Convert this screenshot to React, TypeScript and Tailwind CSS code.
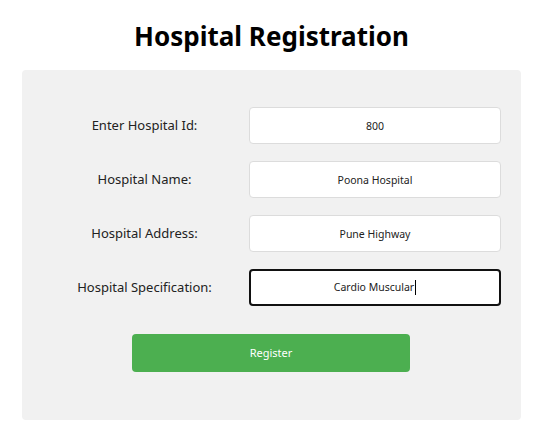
const fields = [
  { label: "Enter Hospital Id:", value: "800" },
  { label: "Hospital Name:", value: "Poona Hospital" },
  { label: "Hospital Address:", value: "Pune Highway" },
];

export default function App() {
  return (
    <div className="min-h-screen bg-white font-['Noto_Sans',sans-serif] text-black">
      <h1 className="h-[70px] pt-[15px] text-center text-[26px] leading-[42px] font-bold">
        Hospital Registration
      </h1>

      <div className="mx-[22px] h-[350px] rounded-[4px] bg-[#f1f1f1] pt-[37px]">
        <div className="flex flex-col gap-[17px]">
          {fields.map((f) => (
            <div key={f.label} className="flex items-center">
              <label className="w-[227px] pl-[18px] text-center text-[13px] text-[#222]">
                {f.label}
              </label>
              <input
                readOnly
                value={f.value}
                className="h-[37px] w-[252px] rounded-[4px] border border-[#dcdcdc] bg-white text-center text-[10.5px] text-[#222] outline-none"
              />
            </div>
          ))}
          <div className="flex items-center">
            <label className="w-[227px] pl-[18px] text-center text-[13px] text-[#222]">
              Hospital Specification:
            </label>
            <div className="flex h-[37px] w-[252px] items-center justify-center rounded-[4px] border-2 border-[#111] bg-white text-[10.5px] text-[#222]">
              Cardio Muscular
              <span className="ml-[1px] inline-block h-[15px] w-px bg-black" />
            </div>
          </div>
        </div>

        <button className="mt-[28px] ml-[110px] h-[38px] w-[278px] rounded-[4px] bg-[#4caf50] text-[11px] text-white">
          Register
        </button>
      </div>
    </div>
  );
}
